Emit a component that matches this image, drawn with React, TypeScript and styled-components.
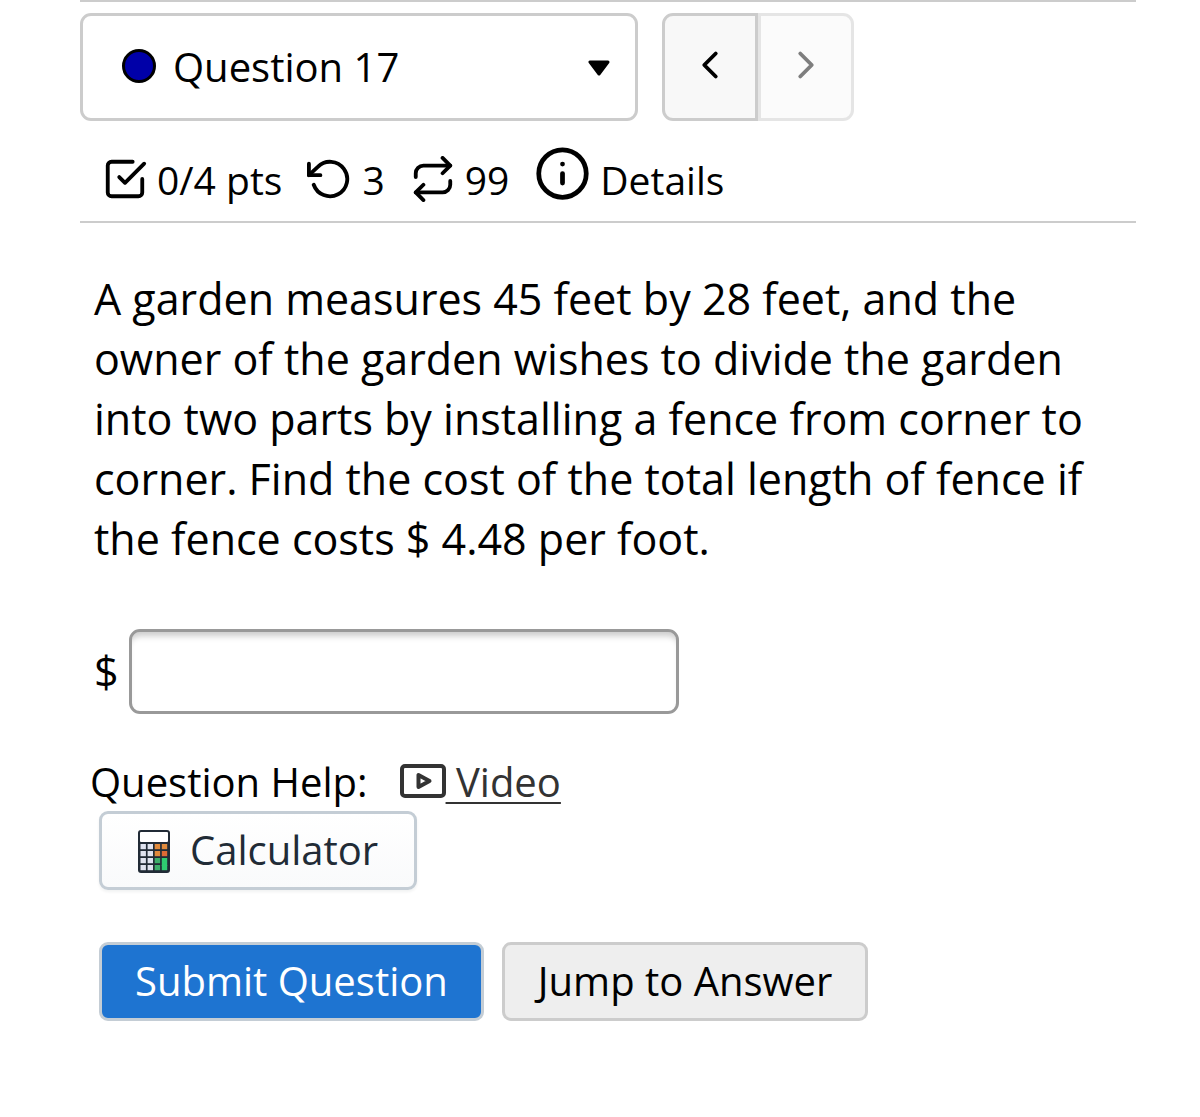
import React from "react";
import styled, { createGlobalStyle } from "styled-components";
import {
  FiCheckSquare,
  FiChevronLeft,
  FiChevronRight,
  FiInfo,
  FiRepeat,
  FiRotateCcw,
} from "react-icons/fi";

const GlobalStyle = createGlobalStyle`
  *, *::before, *::after { box-sizing: border-box; }
  body {
    margin: 0;
    background: #fff;
    color: #000;
    font-family: "Open Sans", "Noto Sans", sans-serif;
    font-size: 40px;
    line-height: 54px;
  }
  button, input, select { font: inherit; color: inherit; margin: 0; }
  svg { display: block; flex: none; }
`;

const Page = styled.main`
  padding: 0 64px 96px 80px;
`;

const Header = styled.header`
  border-top: 2px solid #ccc;
  border-bottom: 2px solid #ccc;
  padding: 11px 0 12px;
`;

const Toolbar = styled.div`
  display: flex;
  gap: 24px;
`;

const Picker = styled.div`
  display: grid;
  grid-template-columns: auto 1fr auto;
  align-items: center;
  flex: 0 1 558px;
  height: 108px;
  border: 3px solid #ccc;
  border-radius: 11px;
  background: #fff;
`;

const PickerSelect = styled.select`
  grid-area: 1 / 1 / 2 / -1;
  width: 100%;
  height: 100%;
  padding: 0 80px 0 90px;
  border: 0;
  border-radius: 8px;
  background: transparent;
  appearance: none;
`;

const StatusDot = styled.span`
  grid-area: 1 / 1;
  width: 34px;
  height: 34px;
  margin: 0 0 3px 39px;
  border: 3px solid #000;
  border-radius: 50%;
  background: #0000a8;
  pointer-events: none;
`;

const Caret = styled.svg`
  grid-area: 1 / 3;
  margin: 2px 25px 0 0;
  pointer-events: none;
`;

const Pager = styled.nav`
  display: flex;
`;

const PagerButton = styled.button<{ $side: "left" | "right" }>`
  display: flex;
  align-items: center;
  justify-content: center;
  width: 96px;
  height: 108px;
  padding: 0 0 4px;
  border: 3px solid #ccc;
  border-radius: ${(p) => (p.$side === "left" ? "11px 0 0 11px" : "0 11px 11px 0")};
  background: #f8f8f8;

  &:disabled {
    color: #000;
    opacity: 0.5;
  }
`;

const Stats = styled.div`
  display: flex;
  align-items: center;
  gap: 25px;
  padding: 30px 22px 0;
  height: 88px;
  font-size: 39px;
`;

const Stat = styled.span`
  display: flex;
  align-items: center;
  gap: 9px;

  svg { margin-bottom: 2px; }
`;

const DetailsButton = styled.button`
  display: flex;
  align-items: center;
  gap: 9px;
  padding: 0;
  border: 0;
  background: none;

  svg { margin-bottom: 14px; }
`;

const Body = styled.form`
  padding: 46px 14px 0;
`;

const Problem = styled.p`
  margin: 0;
  font-size: 43px;
  line-height: 60px;
`;

const AnswerRow = styled.div`
  display: flex;
  align-items: center;
  gap: 10px;
  margin-top: 60px;
  font-size: 43px;
`;

const AnswerInput = styled.input`
  flex: 0 1 550px;
  min-width: 0;
  height: 85px;
  padding: 0 16px;
  border: 3px solid #999;
  border-radius: 11px;
  background: #fff;
  box-shadow: inset 0 8px 6px -4px #ccc;
`;

const HelpRow = styled.div`
  display: flex;
  align-items: center;
  gap: 32px;
  margin: 41px 0 0 -4px;
`;

const VideoLink = styled.a`
  display: flex;
  align-items: center;
  color: #333;
  text-decoration: none;

  svg { margin-bottom: 2px; }

  span {
    white-space: pre;
    text-decoration: underline;
    text-decoration-thickness: 2px;
    text-underline-offset: 5px;
  }
`;

const Button = styled.button<{ $kind: "primary" | "plain" | "tool" }>`
  display: inline-flex;
  align-items: center;
  height: 79px;
  padding: 0 33px 2px;
  border: 3px solid ${(p) => (p.$kind === "plain" ? "#ccc" : "#c4cdd5")};
  border-radius: 9px;
  white-space: nowrap;
  color: ${(p) => ({ primary: "#fff", plain: "#000", tool: "#212b36" })[p.$kind]};
  background: ${(p) =>
    ({
      primary: "#1e74d1",
      plain: "#eee",
      tool: "linear-gradient(#fff, #f9fafb)",
    })[p.$kind]};
  ${(p) =>
    p.$kind === "tool" &&
    "gap: 20px; padding: 0 36px 2px; box-shadow: 0 2px 3px rgba(22, 29, 37, 0.06);"}

  svg { margin-top: 4px; }
`;

const ButtonRow = styled.div<{ $gapTop: number }>`
  display: flex;
  gap: 18px;
  margin-top: ${(p) => p.$gapTop}px;
  padding-left: 5px;
`;

const VideoIcon = () => (
  <svg width="46" height="34" viewBox="0 0 46 34" fill="none" stroke="currentColor" strokeWidth="4" strokeLinejoin="round" aria-hidden="true">
    <rect x="2" y="2" width="42" height="30" rx="3" />
    <path d="M18.5 11v12l11-6z" strokeWidth="4" />
  </svg>
);

const keyColor = (row: number, col: number) => {
  if (col < 2) return "#dfe3f0";
  if (row < 2) return row === 1 && col === 3 ? "#dd6a35" : "#e08a3c";
  return col === 3 ? "#2ecc71" : "#3dae6b";
};

const CalculatorIcon = () => (
  <svg width="32" height="43" viewBox="0 0 32 43" aria-hidden="true">
    <rect width="32" height="43" rx="3" fill="#212b36" />
    <rect x="2" y="2" width="28" height="10" rx="1" fill="#fff" />
    {[0, 1, 2, 3].map((row) =>
      [0, 1, 2, 3].map((col) => (
        <rect
          key={`${row}-${col}`}
          x={2.5 + col * 7.1}
          y={14 + row * 7}
          width="5.4"
          height={row === 2 && col === 3 ? 8 : 5.2}
          fill={keyColor(row, col)}
        />
      ))
    )}
  </svg>
);

export default function App() {
  return (
    <>
      <GlobalStyle />
      <Page>
        <Header>
          <Toolbar>
            <Picker>
              <PickerSelect aria-label="Question" defaultValue="17">
                <option value="17">Question 17</option>
              </PickerSelect>
              <StatusDot />
              <Caret width="22" height="16" viewBox="0 0 22 16" aria-hidden="true">
                <path d="M2 2h18L11 14z" stroke="#000" strokeWidth="3" strokeLinejoin="round" />
              </Caret>
            </Picker>
            <Pager aria-label="Questions">
              <PagerButton type="button" $side="left" aria-label="Previous question">
                <FiChevronLeft size={46} />
              </PagerButton>
              <PagerButton type="button" $side="right" aria-label="Next question" disabled>
                <FiChevronRight size={46} />
              </PagerButton>
            </Pager>
          </Toolbar>
          <Stats>
            <Stat><FiCheckSquare size={46} />0/4 pts</Stat>
            <Stat><FiRotateCcw size={46} />3</Stat>
            <Stat><FiRepeat size={46} />99</Stat>
            <DetailsButton type="button"><FiInfo size={57} />Details</DetailsButton>
          </Stats>
        </Header>
        <Body onSubmit={(e) => e.preventDefault()}>
          <Problem>
            A garden measures 45 feet by 28 feet, and the owner of the garden wishes to divide the
            garden into two parts by installing a fence from corner to corner. Find the cost of the
            total length of fence if the fence costs $ 4.48 per foot.
          </Problem>
          <AnswerRow>
            <label htmlFor="answer">$</label>
            <AnswerInput id="answer" type="text" autoComplete="off" />
          </AnswerRow>
          <HelpRow>
            <span>Question Help:</span>
            <VideoLink href="#video"><VideoIcon /><span> Video</span></VideoLink>
          </HelpRow>
          <ButtonRow $gapTop={2}>
            <Button type="button" $kind="tool"><CalculatorIcon />Calculator</Button>
          </ButtonRow>
          <ButtonRow $gapTop={52}>
            <Button type="submit" $kind="primary">Submit Question</Button>
            <Button type="button" $kind="plain">Jump to Answer</Button>
          </ButtonRow>
        </Body>
      </Page>
    </>
  );
}
